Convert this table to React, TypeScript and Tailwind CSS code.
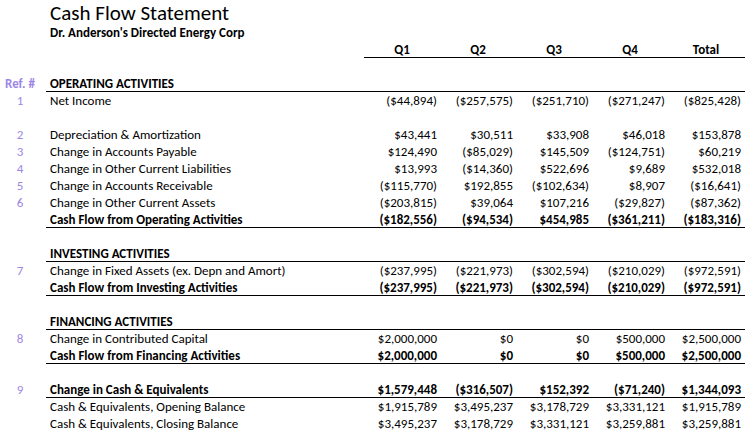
type Row = {
  ref?: string;
  label?: string;
  values?: string[];
  kind?: "normal" | "bold" | "section" | "blank";
  line?: boolean;
};

const rows: Row[] = [
  { ref: "Ref. #", label: "OPERATING ACTIVITIES", kind: "section", line: true },
  { ref: "1", label: "Net Income", values: ["($44,894)", "($257,575)", "($251,710)", "($271,247)", "($825,428)"] },
  { kind: "blank" },
  { ref: "2", label: "Depreciation & Amortization", values: ["$43,441", "$30,511", "$33,908", "$46,018", "$153,878"] },
  { ref: "3", label: "Change in Accounts Payable", values: ["$124,490", "($85,029)", "$145,509", "($124,751)", "$60,219"] },
  { ref: "4", label: "Change in Other Current Liabilities", values: ["$13,993", "($14,360)", "$522,696", "$9,689", "$532,018"] },
  { ref: "5", label: "Change in Accounts Receivable", values: ["($115,770)", "$192,855", "($102,634)", "$8,907", "($16,641)"] },
  { ref: "6", label: "Change in Other Current Assets", values: ["($203,815)", "$39,064", "$107,216", "($29,827)", "($87,362)"] },
  { label: "Cash Flow from Operating Activities", kind: "bold", line: true, values: ["($182,556)", "($94,534)", "$454,985", "($361,211)", "($183,316)"] },
  { kind: "blank" },
  { label: "INVESTING ACTIVITIES", kind: "section", line: true },
  { ref: "7", label: "Change in Fixed Assets (ex. Depn and Amort)", values: ["($237,995)", "($221,973)", "($302,594)", "($210,029)", "($972,591)"] },
  { label: "Cash Flow from Investing Activities", kind: "bold", line: true, values: ["($237,995)", "($221,973)", "($302,594)", "($210,029)", "($972,591)"] },
  { kind: "blank" },
  { label: "FINANCING ACTIVITIES", kind: "section", line: true },
  { ref: "8", label: "Change in Contributed Capital", values: ["$2,000,000", "$0", "$0", "$500,000", "$2,500,000"] },
  { label: "Cash Flow from Financing Activities", kind: "bold", line: true, values: ["$2,000,000", "$0", "$0", "$500,000", "$2,500,000"] },
  { kind: "blank" },
  { ref: "9", label: "Change in Cash & Equivalents", kind: "bold", line: true, values: ["$1,579,448", "($316,507)", "$152,392", "($71,240)", "$1,344,093"] },
  { label: "Cash & Equivalents, Opening Balance", values: ["$1,915,789", "$3,495,237", "$3,178,729", "$3,331,121", "$1,915,789"] },
  { label: "Cash & Equivalents, Closing Balance", values: ["$3,495,237", "$3,178,729", "$3,331,121", "$3,259,881", "$3,259,881"] },
];

const quarters = ["Q1", "Q2", "Q3", "Q4", "Total"];

function SheetRow({ row }: { row: Row }) {
  const bold = row.kind === "bold" || row.kind === "section";
  return (
    <div className="flex h-[17px] leading-[17px]">
      <div
        className={`w-[46px] shrink-0 pr-[6px] text-center text-[#9d87e6] ${row.ref === "Ref. #" ? "font-bold" : ""}`}
      >
        {row.ref}
      </div>
      <div
        className={`flex flex-1 ${row.line ? "border-b border-black" : ""} ${bold ? "font-bold" : ""}`}
      >
        <div className="w-[318px] shrink-0 pl-1 whitespace-nowrap">{row.label}</div>
        {row.values?.map((v, i) => (
          <div key={i} className="w-[76px] shrink-0 pr-[3px] text-right whitespace-nowrap">
            {v}
          </div>
        ))}
      </div>
    </div>
  );
}

export default function App() {
  return (
    <div className="h-[431px] w-[745px] overflow-hidden bg-white text-[13px] text-black [font-family:Carlito,Lato,sans-serif]">
      <div className="h-[24px] pl-[50px] text-[21px] leading-[26px] whitespace-nowrap">Cash Flow Statement</div>
      <div className="h-[17px] pl-[50px] text-[13px] font-bold leading-[17px]">
        Dr. Anderson's Directed Energy Corp
      </div>
      <div className="ml-[364px] flex h-[17px] border-b border-black font-bold leading-[17px]">
        {quarters.map((q) => (
          <div key={q} className="w-[76px] shrink-0 text-center">
            {q}
          </div>
        ))}
      </div>
      <div className="h-[17px]" />
      {rows.map((r, i) => (
        <SheetRow key={i} row={r} />
      ))}
    </div>
  );
}
